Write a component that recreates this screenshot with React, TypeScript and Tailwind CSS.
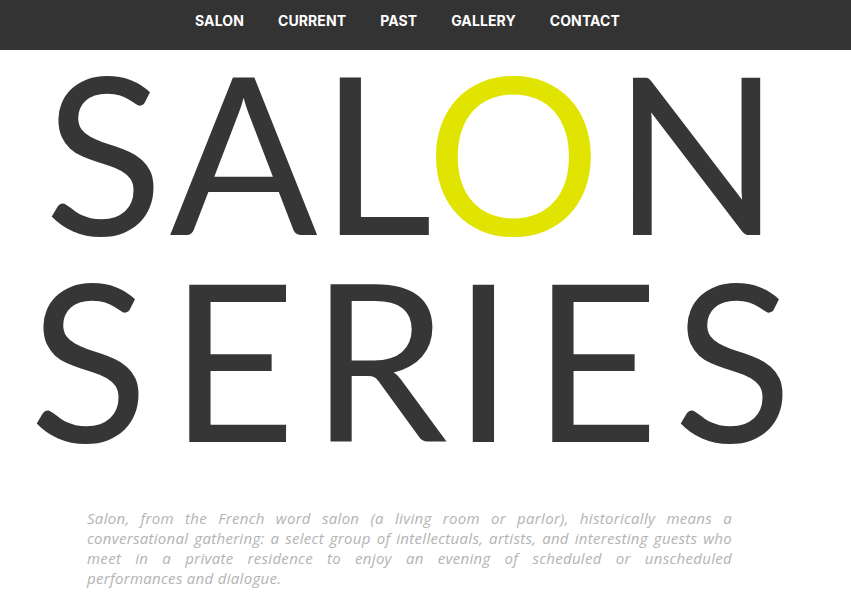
import React from 'react';

const navItems = ['SALON', 'CURRENT', 'PAST', 'GALLERY', 'CONTACT'];

// each letter sits in a fixed-width cell so it lands where the poster puts it
const topRow = [
  { ch: 'S', w: 'w-[150px]' },
  { ch: 'A', w: 'w-[129px]' },
  { ch: 'L', w: 'w-[136px]' },
  { ch: 'O', w: 'w-[139px]', accent: true },
  { ch: 'N', w: 'w-[227px]' },
];

const bottomRow = [
  { ch: 'S', w: 'w-[140px]' },
  { ch: 'E', w: 'w-[147px]' },
  { ch: 'R', w: 'w-[146px]' },
  { ch: 'I', w: 'w-[63px]' },
  { ch: 'E', w: 'w-[161px]' },
  { ch: 'S', w: 'w-[114px]' },
];

const lines = [
  'Salon, from the French word salon (a living room or parlor), historically means a',
  'conversational gathering: a select group of intellectuals, artists, and interesting guests who',
  'meet in a private residence to enjoy an evening of scheduled or unscheduled',
];

const Letter = ({ ch, w, accent }: { ch: string; w: string; accent?: boolean }) => (
  <span className={`${w} flex justify-center ${accent ? 'text-[#e1e300]' : 'text-[#363636]'}`}>
    {ch}
  </span>
);

export default function App() {
  return (
    <div className="w-[851px] h-[614px] bg-white overflow-hidden">
      <header className="h-[50px] bg-[#333333] pt-[11px]">
        <nav className="flex justify-center gap-[34px] pr-[36px] font-['Inter',sans-serif] font-bold text-[14px] leading-[20px] text-white">
          {navItems.map((item) => (
            <a key={item} href="#" className="tracking-[0.1px]">
              {item}
            </a>
          ))}
        </nav>
      </header>

      <div className="font-['Lato',sans-serif] text-[219px] leading-[185px] font-normal">
        <div className="flex mt-[8px] pl-[29px]">
          {topRow.map((l, i) => (
            <Letter key={i} {...l} />
          ))}
        </div>
        <div className="flex mt-[22px] pl-[19px]">
          {bottomRow.map((l, i) => (
            <Letter key={i} {...l} />
          ))}
        </div>
      </div>

      <div className="mt-[58px] ml-[87px] w-[645px] font-['Open_Sans',sans-serif] italic text-[15px] tracking-[0.3px] leading-[20px] text-[#b3b3b3]">
        {lines.map((line) => (
          <p key={line} className="text-justify [text-align-last:justify] whitespace-nowrap">
            {line}
          </p>
        ))}
        <p>performances and dialogue.</p>
      </div>
    </div>
  );
}
